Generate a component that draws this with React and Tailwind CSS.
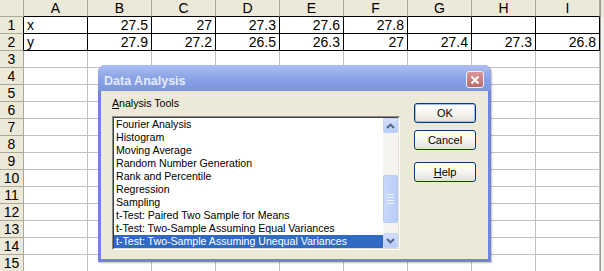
import React from 'react';

const COLS = ['A', 'B', 'C', 'D', 'E', 'F', 'G', 'H', 'I'];
const DATA = {
  1: ['x', '27.5', '27', '27.3', '27.6', '27.8', '', '', ''],
  2: ['y', '27.9', '27.2', '26.5', '26.3', '27', '27.4', '27.3', '26.8'],
};
const TOOLS = [
  'Fourier Analysis',
  'Histogram',
  'Moving Average',
  'Random Number Generation',
  'Rank and Percentile',
  'Regression',
  'Sampling',
  't-Test: Paired Two Sample for Means',
  't-Test: Two-Sample Assuming Equal Variances',
  't-Test: Two-Sample Assuming Unequal Variances',
];

function Sheet() {
  const rows = Array.from({ length: 15 }, (_, i) => i + 1);
  return (
    <div className="font-['Liberation_Sans',Arial,sans-serif] text-[14px] text-black">
      {/* header row */}
      <div className="flex h-[17px]">
        <div className="w-[24px] shrink-0 bg-[#ece9d8] border-r border-b border-[#aca899]" />
        {COLS.map((c) => (
          <div key={c} className="w-[64px] shrink-0 bg-[#ece9d8] border-r border-[#aca899] border-b border-b-black flex items-center justify-center leading-none">
            {c}
          </div>
        ))}
        <div className="w-[4px] shrink-0 bg-[#ece9d8] border-l border-[#9a9a9a]" />
      </div>
      {rows.map((r) => {
        const vals = DATA[r];
        return (
          <div key={r} className="flex h-[17px]">
            <div className={`w-[24px] shrink-0 bg-[#ece9d8] border-b border-b-[#aca899] border-r flex items-center justify-center leading-none ${vals ? 'border-r-black' : 'border-r-[#aca899]'}`}>
              {r}
            </div>
            {COLS.map((c, i) => {
              const v = vals ? vals[i] : '';
              const num = v !== '' && !isNaN(Number(v));
              return (
                <div
                  key={c}
                  className={`w-[64px] shrink-0 bg-white border-r border-b flex items-center leading-none px-[3px] ${vals ? 'border-black' : 'border-[#c0c0c0]'} ${num ? 'justify-end' : 'justify-start'}`}
                >
                  {v}
                </div>
              );
            })}
            <div className="w-[4px] shrink-0 bg-[#f3f2ec] border-l border-[#9a9a9a]" />
          </div>
        );
      })}
    </div>
  );
}

function XpButton({ children, primary, className }) {
  return (
    <div
      className={`h-[20px] rounded-[3px] border border-[#003c74] bg-linear-to-b from-white via-[#f6f5f0] to-[#e3e1d8] flex items-center justify-center text-[11px] leading-none ${primary ? 'shadow-[inset_0_0_0_1px_#9dbcf0]' : ''} ${className || ''}`}
    >
      {children}
    </div>
  );
}

function ScrollArrow({ up }) {
  return (
    <div className="h-[15px] w-[15px] rounded-[2px] border border-[#c3d3fd] bg-linear-to-b from-[#d6e2fd] to-[#b6cbf7] flex items-center justify-center">
      <svg width="9" height="6" viewBox="0 0 9 6">
        <path d={up ? 'M1 5 L4.5 1.5 L8 5' : 'M1 1 L4.5 4.5 L8 1'} fill="none" stroke="#4d6185" strokeWidth="1.8" />
      </svg>
    </div>
  );
}

function DataAnalysisDialog() {
  return (
    <div className="absolute left-[98px] top-[65px] w-[393px] h-[197px] rounded-t-[7px] bg-[#7284d9] flex flex-col overflow-hidden font-['Liberation_Sans',Tahoma,sans-serif] shadow-[1px_1px_2px_rgba(0,0,0,0.25)]">
      {/* title bar */}
      <div className="h-[26px] shrink-0 flex items-start justify-between pl-[6px] pr-[7px] bg-linear-to-b from-[#aebff2] via-[#8ba3e6] to-[#7b94de] rounded-t-[7px]">
        <span className="mt-[9px] text-[12.5px] leading-[15px] font-bold text-[#e4ebfb]">Data Analysis</span>
        <div className="mt-[6px] w-[18px] h-[17px] rounded-[3px] border border-[#eef0fb] bg-linear-to-b from-[#d99696] to-[#b96a70] flex items-center justify-center">
          <svg width="10" height="10" viewBox="0 0 10 10">
            <path d="M1.5 1.5 L8.5 8.5 M8.5 1.5 L1.5 8.5" stroke="white" strokeWidth="2" />
          </svg>
        </div>
      </div>
      {/* body */}
      <div className="flex-1 mx-[3px] mb-[3px] bg-[#ece9d8] flex pl-[11px] pt-[6px] text-[10.6px] text-black">
        <div className="w-[288px] flex flex-col">
          <div className="h-[13px] leading-[13px]">
            <span className="underline">A</span>nalysis Tools
          </div>
          <div className="mt-[6px] h-[134px] border border-t-[#8a8a8a] border-l-[#8a8a8a] border-r-white border-b-white">
            <div className="h-full border border-t-[#404040] border-l-[#404040] border-r-[#e2dfd2] border-b-[#e2dfd2] bg-white flex">
              <div className="flex-1 flex flex-col">
                {TOOLS.map((t, i) => (
                  <div
                    key={t}
                    className={`h-[13px] leading-[13px] pl-[2px] whitespace-nowrap ${i === TOOLS.length - 1 ? 'bg-[#316ac5] text-white' : ''}`}
                  >
                    {t}
                  </div>
                ))}
              </div>
              <div className="w-[15px] bg-[#f5f4ef] flex flex-col">
                <ScrollArrow up />
                <div className="flex-1">
                  <div className="mt-[42px] h-[48px] rounded-[2px] border border-[#b8cbf6] bg-linear-to-r from-[#c9d8fc] to-[#b9cdf8] flex flex-col items-center justify-center gap-[2px]">
                    <div className="w-[7px] h-px bg-[#eef3ff]" />
                    <div className="w-[7px] h-px bg-[#eef3ff]" />
                    <div className="w-[7px] h-px bg-[#eef3ff]" />
                    <div className="w-[7px] h-px bg-[#eef3ff]" />
                  </div>
                </div>
                <ScrollArrow />
              </div>
            </div>
          </div>
        </div>
        <div className="ml-[14px] w-[62px] flex flex-col pt-[6px]">
          <XpButton primary>OK</XpButton>
          <XpButton className="mt-[7px]">Cancel</XpButton>
          <XpButton className="mt-[12px]">
            <span>
              <span className="underline">H</span>elp
            </span>
          </XpButton>
        </div>
      </div>
    </div>
  );
}

export default function App() {
  return (
    <div className="relative w-[604px] h-[271px] overflow-hidden bg-white">
      <Sheet />
      <DataAnalysisDialog />
    </div>
  );
}
